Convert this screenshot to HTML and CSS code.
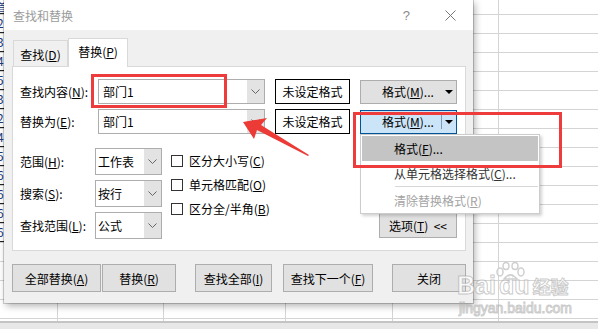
FILE: index.html
```html
<!DOCTYPE html>
<html lang="zh-CN">
<head>
    <meta charset="UTF-8">
    <title>查找和替换</title>
    <link rel="stylesheet" href="styles.css">
</head>
<body>
    <div class="sheet">
        <div class="col c1"><div class="rowhdr"><span>首</span><span>2</span><span>3</span><span>4</span><span>5</span><span>3</span><span>2</span><span>4</span><span>5</span><span>6</span><span>6</span><span>6</span><span>6</span></div></div>
        <div class="col c2"></div>
        <div class="col c3"></div>
        <div class="col c4"></div>
        <div class="col c5"></div>
        <div class="col c6"></div>
    </div>
    <div class="statusbar"></div>

    <div class="dialog">
        <div class="titlebar">
            <span class="title">查找和替换</span>
            <span class="help">?</span>
            <svg class="close" width="11" height="11" viewBox="0 0 11 11"><path d="M0.5 0.5 L10.5 10.5 M10.5 0.5 L0.5 10.5" stroke="#777" stroke-width="1" fill="none"/></svg>
        </div>
        <div class="dlg-body">
            <div class="tabs">
                <div class="tab">查找(<u>D</u>)</div>
                <div class="tab active">替换(<u>P</u>)</div>
            </div>
            <div class="panel">
                <div class="row">
                    <span class="lbl-wide">查找内容(<u>N</u>):</span>
                    <div class="combo wide"><span class="val">部门1</span><span class="drop"><svg width="9" height="5" viewBox="0 0 9 5"><path d="M0.5 0.5 L4.5 4.5 L8.5 0.5" stroke="#666" fill="none"/></svg></span></div>
                    <div class="fmtbox">未设定格式</div>
                    <div class="fmtbtn"><span class="fmtlbl">格式(<u>M</u>)...</span><span class="split"></span><span class="caret"></span></div>
                </div>
                <div class="row">
                    <span class="lbl-wide">替换为(<u>E</u>):</span>
                    <div class="combo wide"><span class="val">部门1</span><span class="drop"><svg width="9" height="5" viewBox="0 0 9 5"><path d="M0.5 0.5 L4.5 4.5 L8.5 0.5" stroke="#666" fill="none"/></svg></span></div>
                    <div class="fmtbox">未设定格式</div>
                    <div class="fmtbtn hot"><span class="fmtlbl">格式(<u>M</u>)...</span><span class="split"></span><span class="caret"></span></div>
                </div>
                <div class="lower">
                    <div class="scope">
                        <div class="srow">
                            <span class="lbl-narrow">范围(<u>H</u>):</span>
                            <div class="combo small"><span class="val">工作表</span><span class="drop"><svg width="9" height="5" viewBox="0 0 9 5"><path d="M0.5 0.5 L4.5 4.5 L8.5 0.5" stroke="#666" fill="none"/></svg></span></div>
                        </div>
                        <div class="srow">
                            <span class="lbl-narrow">搜索(<u>S</u>):</span>
                            <div class="combo small"><span class="val">按行</span><span class="drop"><svg width="9" height="5" viewBox="0 0 9 5"><path d="M0.5 0.5 L4.5 4.5 L8.5 0.5" stroke="#666" fill="none"/></svg></span></div>
                        </div>
                        <div class="srow">
                            <span class="lbl-narrow">查找范围(<u>L</u>):</span>
                            <div class="combo small"><span class="val">公式</span><span class="drop"><svg width="9" height="5" viewBox="0 0 9 5"><path d="M0.5 0.5 L4.5 4.5 L8.5 0.5" stroke="#666" fill="none"/></svg></span></div>
                        </div>
                    </div>
                    <div class="checks">
                        <label class="check"><span class="box"></span>区分大小写(<u>C</u>)</label>
                        <label class="check"><span class="box"></span>单元格匹配(<u>O</u>)</label>
                        <label class="check"><span class="box"></span>区分全/半角(<u>B</u>)</label>
                    </div>
                    <div class="btn options">选项(<u>T</u>)&nbsp;&nbsp;&lt;&lt;</div>
                </div>
            </div>
            <div class="actions">
                <div class="btn b-all">全部替换(<u>A</u>)</div>
                <div class="btn b-rep">替换(<u>R</u>)</div>
                <div class="btn b-findall">查找全部(<u>I</u>)</div>
                <div class="btn b-next">查找下一个(<u>F</u>)</div>
                <div class="btn b-close">关闭</div>
            </div>
        </div>
    </div>

    <!-- dropdown opened from the second format button -->
    <div class="menu">
        <div class="item sel">格式(<u>F</u>)...</div>
        <div class="item">从单元格选择格式(<u>C</u>)...</div>
        <div class="sep"></div>
        <div class="item off">清除替换格式(<u>R</u>)</div>
    </div>

    <!-- annotations -->
    <div class="mark mark-find"></div>
    <div class="mark mark-menu"></div>
    <svg class="arrow" width="80" height="50" viewBox="0 0 80 50">
        <polygon points="2,4 26,0 20,7 68,37 67,38 16,12 13,21" fill="#ec3a36"/>
    </svg>

    <div class="wm">
        <div class="wm-logo"><span class="wm-bai">Bai</span><span class="wm-du">du</span><span class="wm-jy">经验</span></div>
        <div class="wm-url">jingyan.baidu.com</div>
        <svg class="wm-paw" width="34" height="18" viewBox="0 0 34 18">
            <g fill="rgba(255,255,255,0.6)" stroke="#cfcfcf" stroke-width="1.5">
                <ellipse cx="6" cy="10" rx="3" ry="4"/>
                <ellipse cx="12" cy="4" rx="3" ry="3.5"/>
                <ellipse cx="21" cy="4" rx="3" ry="3.5"/>
                <ellipse cx="27" cy="10" rx="3" ry="4"/>
                <path d="M10 17 Q16 9 23 17 Z"/>
            </g>
        </svg>
    </div>
</body>
</html>
```
FILE: styles.css
```css
* {
    box-sizing: border-box;
}
body {
    margin: 0;
    width: 598px;
    height: 329px;
    overflow: hidden;
    position: relative;
    background: #fff;
    color: #000;
    font-family: "Noto Sans CJK SC", "Microsoft YaHei", sans-serif;
    font-size: 12px;
}
u {
    text-underline-offset: 1px;
}

/* spreadsheet behind the dialog */
.sheet {
    display: flex;
    height: 321px;
    background-image: linear-gradient(#d4d4d4 1px, transparent 1px);
    background-size: 100% 19px;
    background-position: 0 14px;
}
.col {
    height: 100%;
    border-right: 1px solid #d4d4d4;
}
.c1 { width: 58px; }
.c2 { width: 106px; }
.c3 { width: 122px; }
.c4 { width: 107px; }
.c5 { width: 106px; }
.c6 { flex: 1; border-right: none; }
.rowhdr {
    width: 4px;
    height: 255px;
    overflow: hidden;
    display: flex;
    flex-direction: column;
    background-image: linear-gradient(#222 1px, transparent 1px);
    background-size: 100% 19px;
    background-position: 0 13px;
}
.rowhdr span {
    height: 19px;
    flex: none;
    line-height: 19px;
    margin-left: -3px;
    font-size: 12px;
    color: #203a80;
}
.rowhdr span:first-child {
    height: 13px;
    line-height: 13px;
    font-size: 10px;
}
.statusbar {
    height: 8px;
    background: #e8e8e8;
    border-top: 2px solid #c4c4c4;
}

/* dialog */
.dialog {
    position: absolute;
    left: 4px;
    top: 0;
    width: 469px;
    height: 303px;
    display: flex;
    flex-direction: column;
    box-shadow: 0 0 0 1px rgba(0, 0, 0, 0.18), 2px 3px 7px rgba(0, 0, 0, 0.3);
}
.titlebar {
    height: 30px;
    background: #fff;
    display: flex;
    align-items: center;
    padding: 0 17px 0 9px;
}
.title {
    color: #9b9b9b;
}
.help {
    margin-left: auto;
    margin-right: 35px;
    color: #8a8a8a;
    font-family: "Liberation Sans", sans-serif;
    font-size: 13px;
}
.close {
    display: block;
}
.dlg-body {
    flex: 1;
    background: #f0f0f0;
    padding: 8px 7px 0 8px;
}
.tabs {
    display: flex;
    align-items: flex-end;
    height: 28px;
    padding-left: 1px;
}
.tab {
    width: 55px;
    height: 26px;
    border: 1px solid #d9d9d9;
    border-bottom: none;
    display: flex;
    align-items: center;
    justify-content: center;
    padding-top: 1px;
}
.tab.active {
    width: 60px;
    height: 29px;
    margin-bottom: -1px;
    background: #fff;
    position: relative;
    z-index: 1;
    padding-top: 0;
    padding-bottom: 3px;
}
.panel {
    height: 185px;
    background: #fff;
    border: 1px solid #d9d9d9;
    padding: 12px 8px 0 7px;
    display: flex;
    flex-direction: column;
}
.row {
    display: flex;
    align-items: center;
    height: 25px;
}
.row + .row {
    margin-top: 5px;
}
.lbl-wide {
    width: 78px;
}
.lbl-narrow {
    width: 75px;
}
.combo {
    display: flex;
    height: 25px;
    border: 1px solid #adadad;
    background: #fff;
}
.combo.wide {
    width: 167px;
}
.combo.small {
    width: 67px;
    height: 27px;
}
.val {
    flex: 1;
    display: flex;
    align-items: center;
    padding-left: 4px;
}
.small .val {
    padding-left: 2px;
}
.drop {
    width: 17px;
    background: #e3e3e3;
    display: flex;
    align-items: center;
    justify-content: center;
}
.fmtbox {
    width: 75px;
    height: 25px;
    margin-left: 10px;
    border: 1px solid #000;
    background: #fff;
    display: flex;
    align-items: center;
    justify-content: center;
}
.fmtbtn {
    width: 97px;
    height: 24px;
    margin-left: 10px;
    background: #e1e1e1;
    border: 1px solid #adadad;
    display: flex;
    align-items: center;
}
.fmtbtn.hot {
    background: #cce4f7;
    border-color: #005499;
}
.fmtlbl {
    flex: 1;
    padding-left: 21px;
}
.split {
    width: 1px;
    height: 14px;
}
.hot .split {
    background: #7f9ab8;
}
.caret {
    width: 0;
    height: 0;
    margin: 1px 3px 0 3px;
    border-left: 4px solid transparent;
    border-right: 4px solid transparent;
    border-top: 4px solid #000;
}
.lower {
    display: flex;
    margin-top: 14px;
    height: 91px;
}
.scope {
    display: flex;
    flex-direction: column;
    gap: 5px;
}
.srow {
    display: flex;
    align-items: center;
    height: 27px;
}
.checks {
    margin-left: 9px;
    display: flex;
    flex-direction: column;
}
.check {
    height: 24px;
    display: flex;
    align-items: center;
    padding-top: 1px;
}
.box {
    width: 12px;
    height: 12px;
    border: 1px solid #333;
    background: #fff;
    margin-right: 6px;
}
.btn {
    background: #e1e1e1;
    border: 1px solid #adadad;
    display: flex;
    align-items: center;
    justify-content: center;
    height: 28px;
}
.options {
    margin-left: auto;
    align-self: flex-end;
    width: 78px;
    height: 26px;
    margin-bottom: 1px;
}
.actions {
    display: flex;
    margin-top: 13px;
}
.b-all { width: 89px; }
.b-rep { width: 74px; margin-left: 1px; }
.b-findall { width: 77px; margin-left: 19px; }
.b-next { width: 90px; margin-left: 11px; }
.b-close { width: 74px; margin-left: 19px; }

/* opened dropdown menu */
.menu {
    position: absolute;
    left: 360px;
    top: 134px;
    width: 180px;
    height: 80px;
    background: #fff;
    border: 1px solid #cccccc;
    box-shadow: 2px 2px 3px rgba(0, 0, 0, 0.18);
    padding: 1px;
}
.item {
    height: 24px;
    display: flex;
    align-items: center;
    padding-left: 32px;
    color: #333;
}
.item.sel {
    height: 25px;
    background: #c4c4c4;
    color: #000;
}
.item.off {
    color: #a3a3a3;
}
.sep {
    height: 1px;
    margin: 1px 0 1px 33px;
    background: #d7d7d7;
}

/* red annotations */
.mark {
    position: absolute;
    border: 3px solid #ee3b3b;
}
.mark-find {
    left: 91px;
    top: 74px;
    width: 136px;
    height: 34px;
}
.mark-menu {
    left: 353px;
    top: 112px;
    width: 209px;
    height: 56px;
}
.arrow {
    position: absolute;
    left: 241px;
    top: 118px;
    overflow: visible;
}

/* watermark */
.wm {
    position: absolute;
    left: 457px;
    top: 262px;
    width: 112px;
    color: rgba(255, 255, 255, 0.8);
    -webkit-text-stroke: 1px rgba(150, 150, 150, 0.5);
}
.wm-logo {
    display: flex;
    align-items: baseline;
    padding-top: 9px;
    font-family: "Liberation Sans", sans-serif;
    font-weight: bold;
    height: 38px;
}
.wm-bai {
    font-size: 25px;
}
.wm-du {
    font-size: 25px;
    margin-left: 3px;
}
.wm-jy {
    font-family: "Noto Sans CJK SC", sans-serif;
    font-size: 18px;
    margin-left: 3px;
}
.wm-url {
    font-family: "Liberation Sans", sans-serif;
    font-size: 14px;
    margin-left: 2px;
}
.wm-paw {
    position: absolute;
    left: 37px;
    top: 0;
}
```
